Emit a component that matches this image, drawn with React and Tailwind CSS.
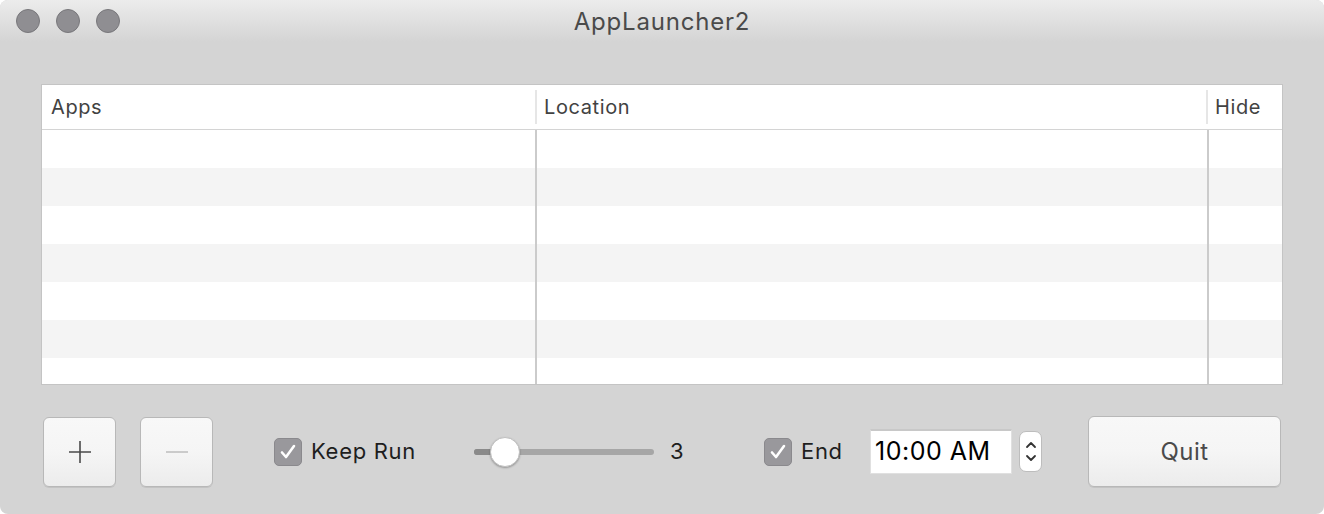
import React from 'react';

const font = { fontFamily: 'Inter, "Liberation Sans", sans-serif' };

const Check = () => (
  <div className="w-[28px] h-[28px] rounded-[5px] bg-[#99989c] border border-[#8a898d] flex items-center justify-center">
    <svg width="20" height="20" viewBox="0 0 20 20">
      <path d="M4 10.5 L8 15 L16 4" fill="none" stroke="white" strokeWidth="2.6" strokeLinecap="round" strokeLinejoin="round" />
    </svg>
  </div>
);

const rows = [0, 1, 2, 3, 4, 5, 6];

export default function App() {
  return (
    <div className="w-[1324px] h-[514px] bg-[#d4d4d4] rounded-[8px] overflow-hidden flex flex-col" style={font}>
      {/* title bar */}
      <div className="h-[42px] bg-gradient-to-b from-[#ececec] to-[#d4d4d4] relative flex items-center justify-center">
        <div className="absolute left-[16px] top-[9px] flex gap-[16px]">
          <div className="w-[24px] h-[24px] rounded-full bg-[#8f8e92] border border-[#78777b]" />
          <div className="w-[24px] h-[24px] rounded-full bg-[#8f8e92] border border-[#78777b]" />
          <div className="w-[24px] h-[24px] rounded-full bg-[#8f8e92] border border-[#78777b]" />
        </div>
        <span className="text-[24px] tracking-[0.8px] text-[#4a4a4a] mt-[1px]">AppLauncher2</span>
      </div>

      {/* table */}
      <div className="ml-[41px] mt-[42px] w-[1242px] h-[301px] border border-[#c4c4c4] bg-white flex flex-col overflow-hidden">
        <div className="h-[45px] shrink-0 flex border-b border-[#d4d4d4] text-[20px] tracking-[0.6px] text-[#424242]">
          <div className="w-[493px] flex items-center pl-[9px]">Apps</div>
          <div className="flex-1 flex items-center">
            <div className="w-[2px] h-[34px] bg-[#e6e6e6]" />
            <span className="pl-[7px]">Location</span>
          </div>
          <div className="w-[76px] flex items-center">
            <div className="w-[2px] h-[34px] bg-[#e6e6e6]" />
            <span className="pl-[7px]">Hide</span>
          </div>
        </div>
        <div className="flex-1 relative">
          {rows.map((r) => (
            <div key={r} className={`h-[38px] ${r % 2 === 1 ? 'bg-[#f4f4f4]' : 'bg-white'}`} />
          ))}
          <div className="absolute top-0 bottom-0 left-[493px] w-[2px] bg-[#cbcbcb]" />
          <div className="absolute top-0 bottom-0 left-[1165px] w-[2px] bg-[#cbcbcb]" />
        </div>
      </div>

      {/* controls */}
      <div className="mt-[31px] flex items-center pl-[43px]">
        <button className="w-[73px] h-[70px] rounded-[6px] border border-[#b8b8b8] bg-gradient-to-b from-[#f8f8f8] via-[#f5f5f5] to-[#ececec] flex items-center justify-center shadow-[0_1px_0_rgba(0,0,0,0.08)]">
          <svg width="24" height="24" viewBox="0 0 24 24">
            <path d="M12 1 V23 M1 12 H23" stroke="#4a4a4a" strokeWidth="1.6" />
          </svg>
        </button>
        <button className="ml-[24px] w-[73px] h-[70px] rounded-[6px] border border-[#b8b8b8] bg-gradient-to-b from-[#f8f8f8] via-[#f5f5f5] to-[#ececec] flex items-center justify-center shadow-[0_1px_0_rgba(0,0,0,0.08)]">
          <svg width="24" height="24" viewBox="0 0 24 24">
            <path d="M1 12 H23" stroke="#bdbdbd" strokeWidth="1.6" />
          </svg>
        </button>

        <div className="ml-[61px] w-[142px] shrink-0 flex items-center gap-[9px]">
          <Check />
          <span className="text-[22px] tracking-[0.7px] text-[#1e1e1e]">Keep Run</span>
        </div>

        <div className="ml-[58px] relative w-[180px] h-[32px] flex items-center">
          <div className="w-full h-[6px] rounded-full bg-[#a6a6a6] overflow-hidden flex">
            <div className="w-[30px] h-full bg-[#8a8a8a]" />
          </div>
          <div className="absolute left-[16px] top-[1px] w-[30px] h-[30px] rounded-full bg-white border border-[#c0c0c0] shadow-[0_1px_2px_rgba(0,0,0,0.3)]" />
        </div>
        <span className="ml-[16px] w-[14px] text-[22px] text-[#1e1e1e]">3</span>

        <div className="ml-[80px] w-[80px] shrink-0 flex items-center gap-[9px]">
          <Check />
          <span className="text-[22px] tracking-[0.7px] text-[#1e1e1e]">End</span>
        </div>

        <div className="ml-[26px] w-[142px] h-[45px] bg-white border-t-2 border-[#c8c8c8] border-x border-b border-x-[#e0e0e0] border-b-[#e0e0e0] flex items-center pl-[4px]">
          <span className="text-[25px] tracking-[0.5px] text-black">10:00 AM</span>
        </div>
        <div className="ml-[7px] w-[23px] h-[41px] rounded-[7px] bg-white border border-[#bdbdbd] flex flex-col items-center justify-center gap-[5px]">
          <svg width="12" height="8" viewBox="0 0 12 8">
            <path d="M2 6 L6 2 L10 6" fill="none" stroke="#333" strokeWidth="1.8" strokeLinecap="round" strokeLinejoin="round" />
          </svg>
          <svg width="12" height="8" viewBox="0 0 12 8">
            <path d="M2 2 L6 6 L10 2" fill="none" stroke="#333" strokeWidth="1.8" strokeLinecap="round" strokeLinejoin="round" />
          </svg>
        </div>

        <button className="ml-[46px] w-[193px] h-[71px] rounded-[6px] border border-[#b8b8b8] bg-gradient-to-b from-[#f8f8f8] via-[#f5f5f5] to-[#ececec] flex items-center justify-center text-[24px] tracking-[0.5px] text-[#4a4a4a] shadow-[0_1px_0_rgba(0,0,0,0.08)]">
          Quit
        </button>
      </div>
    </div>
  );
}
